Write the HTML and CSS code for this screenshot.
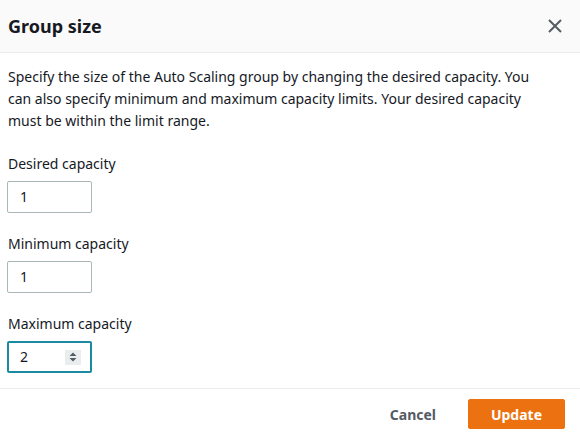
FILE: index.html
```html
<!DOCTYPE html>
<html>
<head>
<meta charset="utf-8">
<link rel="stylesheet" href="styles.css">
</head>
<body>
<div class="modal">
  <div class="header">
    <h2 class="title">Group size</h2>
    <button class="close" aria-label="Close">
      <svg width="16" height="16" viewBox="0 0 16 16"><path d="M2 2 L14 14 M14 2 L2 14" stroke="#545b64" stroke-width="2" fill="none"/></svg>
    </button>
  </div>
  <div class="body">
    <p class="desc">Specify the size of the Auto Scaling group by changing the desired capacity. You can also specify minimum and maximum capacity limits. Your desired capacity must be within the limit range.</p>
    <div class="field">
      <div class="label">Desired capacity</div>
      <div class="input">1</div>
    </div>
    <div class="field">
      <div class="label">Minimum capacity</div>
      <div class="input">1</div>
    </div>
    <div class="field">
      <div class="label">Maximum capacity</div>
      <div class="input focused">2
        <span class="spinner"><svg width="10" height="12" viewBox="0 0 10 12"><path d="M1.5 5 L5 1.5 L8.5 5 Z M1.5 7 L5 10.5 L8.5 7 Z" fill="#545b64"/></svg></span>
      </div>
    </div>
  </div>
  <div class="footer">
    <button class="cancel">Cancel</button>
    <button class="update">Update</button>
  </div>
</div>
</body>
</html>
```
FILE: styles.css
```css
html, body {
  margin: 0;
  padding: 0;
  background: #ffffff;
}
body {
  font-family: "Noto Sans", "Open Sans", sans-serif;
  color: #16191f;
  font-size: 14px;
  width: 580px;
  height: 434px;
  overflow: hidden;
}
.modal {
  display: flex;
  flex-direction: column;
}
.header {
  height: 52px;
  background: #fafafa;
  border-bottom: 1px solid #eaeded;
  display: flex;
  align-items: center;
  justify-content: space-between;
  padding: 0 17px 0 8px;
}
.title {
  margin: 0;
  font-size: 18px;
  font-weight: 700;
  line-height: 22px;
  color: #16191f;
}
.close {
  background: none;
  border: none;
  padding: 0;
  width: 16px;
  height: 16px;
  display: flex;
  cursor: pointer;
}
.body {
  padding: 13px 8px 15px 8px;
  display: flex;
  flex-direction: column;
}
.desc {
  margin: 0;
  line-height: 22px;
  width: 540px;
}
.field {
  margin-top: 21px;
  display: flex;
  flex-direction: column;
}
.field + .field {
  margin-top: 20px;
}
.label {
  line-height: 22px;
  margin-bottom: 6px;
}
.input {
  box-sizing: border-box;
  width: 85px;
  height: 32px;
  margin-left: -1px;
  border: 1px solid #aab7b8;
  border-radius: 2px;
  padding: 0 12px;
  line-height: 30px;
  display: flex;
  align-items: center;
  justify-content: space-between;
}
.input.focused {
  border: 2px solid #1b8ba3;
  padding: 0 9px 0 11px;
}
.spinner {
  width: 16px;
  height: 15px;
  background: #eaeded;
  display: flex;
  align-items: center;
  justify-content: center;
}
.footer {
  border-top: 1px solid #eaeded;
  display: flex;
  justify-content: flex-end;
  align-items: center;
  gap: 20px;
  padding: 10px 15px 0 0;
}
.cancel, .update {
  font-family: inherit;
  font-size: 14px;
  font-weight: 700;
  border-radius: 2px;
  height: 30px;
  cursor: pointer;
}
.cancel {
  background: none;
  border: none;
  color: #545b64;
  padding: 0 12px;
}
.update {
  background: #ec7211;
  border: 1px solid #ec7211;
  color: #ffffff;
  width: 97px;
}
```
